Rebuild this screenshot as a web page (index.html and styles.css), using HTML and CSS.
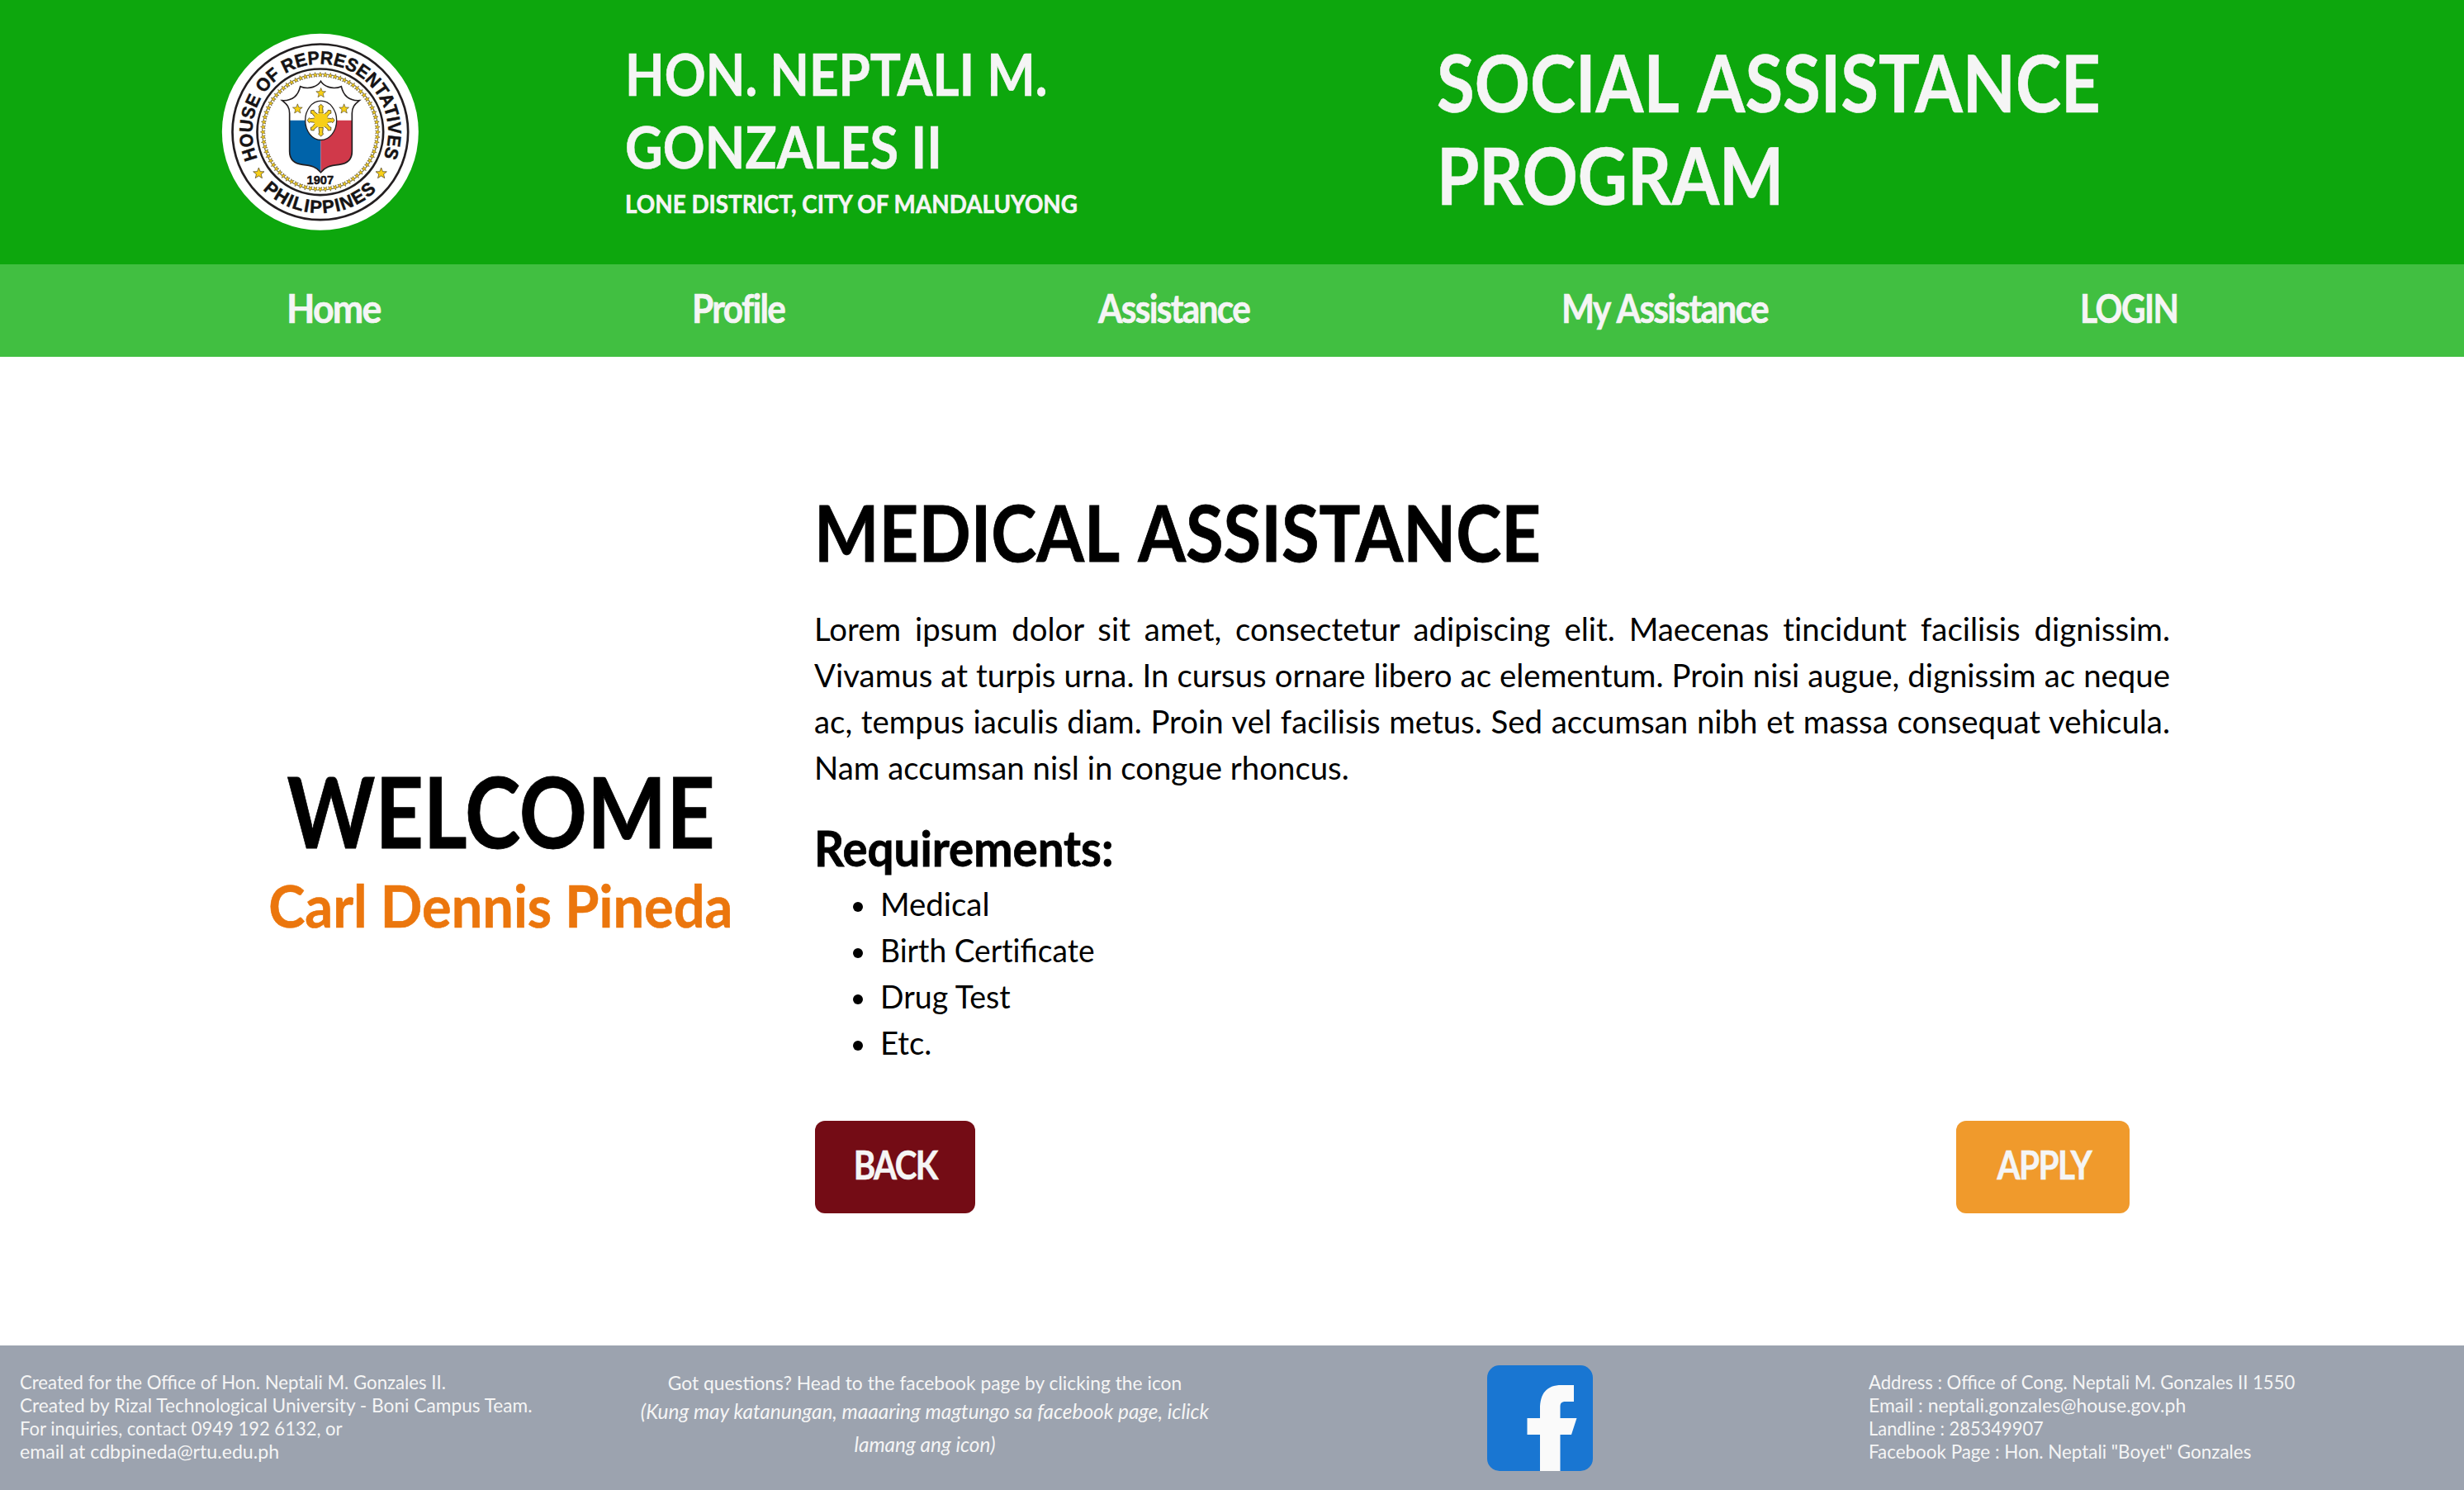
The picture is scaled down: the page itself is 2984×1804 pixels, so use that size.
FILE: index.html
```
<!DOCTYPE html>
<html lang="en">
<head>
<meta charset="utf-8">
<title>Social Assistance Program</title>
<link rel="stylesheet" href="styles.css">
</head>
<body>
<header class="banner">
  <svg class="seal" viewBox="54 60 720 720" role="img" aria-label="House of Representatives seal">
    <defs>
      <path id="star" d="M0-10 2.6-3.3 9.5-3.1 4.1 1.3 5.9 8.1 0 4.2-5.9 8.1-4.1 1.3-9.5-3.1-2.6-3.3Z"/>
      <g id="bead"><use href="#star" transform="translate(0 -208) scale(.95)"/></g>
      <g id="beads"><use href="#bead"/><use href="#bead" transform="rotate(5)"/><use href="#bead" transform="rotate(10)"/><use href="#bead" transform="rotate(15)"/><use href="#bead" transform="rotate(20)"/><use href="#bead" transform="rotate(25)"/></g>
      <g id="quarter"><use href="#beads"/><use href="#beads" transform="rotate(30)"/><use href="#beads" transform="rotate(60)"/></g>
      <path id="ray" d="M-8-26-6-46-9-50 0-58 9-50 6-46 8-26Z"/>
      <path id="arc-top" d="M186 516A247 247 0 1 1 641 516"/>
      <path id="arc-bottom" d="M205 628A295 295 0 0 0 622 628"/>
      <clipPath id="shield-clip"><path d="M415.500 235C405 252 375 268 341 254C334 285 314 307 275 305C294 320 302 330 302 352V490C302 520 318 535 350 538C382 541 400 547 415.500 566C431 547 449 541 481 538C513 535 529 520 529 490V352C529 330 537 320 556 305C517 307 497 285 490 254C456 268 426 252 415.500 235Z"/></clipPath>
    </defs>
    <circle cx="413.500" cy="419.500" r="357" fill="#fff"/>
    <g fill="none" stroke="#231f20">
      <circle cx="413.500" cy="419.500" r="319" stroke-width="8"/>
      <circle cx="413.500" cy="419.500" r="229" stroke-width="8"/>
    </g>
    <g transform="translate(413.500 419.500)" fill="#f7cf17" stroke="#4a3f20" stroke-width="1.600">
      <use href="#quarter"/><use href="#quarter" transform="rotate(90)"/><use href="#quarter" transform="rotate(180)"/><use href="#quarter" transform="rotate(270)"/>
    </g>
    <g class="seal-text">
      <text font-size="67"><textPath href="#arc-top" textLength="968" lengthAdjust="spacingAndGlyphs">HOUSE OF REPRESENTATIVES</textPath></text>
      <text font-size="66"><textPath href="#arc-bottom" textLength="458" lengthAdjust="spacing">PHILIPPINES</textPath></text>
      <text x="413.500" y="608" font-size="46" text-anchor="middle" textLength="98" lengthAdjust="spacingAndGlyphs">1907</text>
    </g>
    <g clip-path="url(#shield-clip)">
      <path fill="#fff" d="M270 230h290v147H270z"/>
      <path fill="#0063a9" d="M270 377h145.500v200H270z"/>
      <path fill="#d0394a" d="M415.500 377H560v200H415.500z"/>
    </g>
    <path fill="none" stroke="#231f20" stroke-width="5" d="M415.500 235C405 252 375 268 341 254C334 285 314 307 275 305C294 320 302 330 302 352V490C302 520 318 535 350 538C382 541 400 547 415.500 566C431 547 449 541 481 538C513 535 529 520 529 490V352C529 330 537 320 556 305C517 307 497 285 490 254C456 268 426 252 415.500 235Z"/>
    <ellipse cx="416" cy="377.500" rx="57" ry="71" fill="#fff" stroke="#231f20" stroke-width="4"/>
    <g transform="translate(416 377)" fill="#f7cf17" stroke="#4a3f20" stroke-width="2.500">
      <use href="#ray"/><use href="#ray" transform="rotate(180)"/>
      <use href="#ray" transform="rotate(90) scale(1 .85)"/><use href="#ray" transform="rotate(270) scale(1 .85)"/>
      <use href="#ray" transform="rotate(45) scale(.9 .88)"/><use href="#ray" transform="rotate(135) scale(.9 .88)"/><use href="#ray" transform="rotate(225) scale(.9 .88)"/><use href="#ray" transform="rotate(315) scale(.9 .88)"/>
      <circle r="26" stroke="none"/>
    </g>
    <g fill="#f7cf17" stroke="#4a3f20" stroke-width="1">
      <use href="#star" transform="translate(416 278) scale(1.850)"/>
      <use href="#star" transform="translate(331 336) scale(1.850)"/>
      <use href="#star" transform="translate(500 336) scale(1.850)"/>
      <use href="#star" transform="translate(190 570) scale(2.100)"/>
      <use href="#star" transform="translate(635 570) scale(2.100)"/>
    </g>
  </svg>
  <div class="office">
    <h2 class="office-name"><span class="fit hon">HON. NEPTALI M.</span><br><span class="fit gon">GONZALES II</span></h2>
    <p class="office-area"><span class="fit lone">LONE DISTRICT, CITY OF MANDALUYONG</span></p>
  </div>
  <h1 class="program"><span class="fit soc">SOCIAL ASSISTANCE</span><br><span class="fit prog">PROGRAM</span></h1>
</header>
<nav class="menu">
  <a><span class="fit home">Home</span></a>
  <a><span class="fit profile">Profile</span></a>
  <a><span class="fit assist">Assistance</span></a>
  <a><span class="fit mine">My Assistance</span></a>
  <a><span class="fit login">LOGIN</span></a>
</nav>
<main class="content">
  <section class="greeting">
    <h2 class="welcome"><span class="fit">WELCOME</span></h2>
    <p class="user"><span class="fit">Carl Dennis Pineda</span></p>
  </section>
  <section class="details">
    <h2 class="title"><span class="fit">MEDICAL ASSISTANCE</span></h2>
    <p class="intro">Lorem ipsum dolor sit amet, consectetur adipiscing elit. Maecenas tincidunt facilisis dignissim. Vivamus at turpis urna. In cursus ornare libero ac elementum. Proin nisi augue, dignissim ac neque ac, tempus iaculis diam. Proin vel facilisis metus. Sed accumsan nibh et massa consequat vehicula. Nam accumsan nisl in congue rhoncus.</p>
    <h3 class="subtitle"><span class="fit">Requirements:</span></h3>
    <ul class="requirements">
      <li>Medical</li>
      <li><span class="fit birth">Birth Cer<span class="plain">t</span>ificate</span></li>
      <li><span class="fit drug">Drug Test</span></li>
      <li>Etc.</li>
    </ul>
    <div class="actions">
      <a class="button back"><span class="fit">BACK</span></a>
      <a class="button apply"><span class="fit">APPLY</span></a>
    </div>
  </section>
</main>
<footer class="footer">
  <p class="credits"><span class="fit c1">Created for the Office of Hon. Neptali M. Gonzales II.</span><br><span class="fit c2">Created by Rizal Technological University - Boni Campus Team.</span><br><span class="fit c3">For inquiries, contact 0949 192 6132, or</span><br><span class="fit c4">email at cdbpineda@rtu.edu.ph</span></p>
  <div class="help">
    <p>Got questions? Head to the facebook page by clicking the icon</p>
    <p class="help-local">(Kung may katanungan, maaaring magtungo sa facebook page, iclick lamang ang icon)</p>
  </div>
  <svg class="facebook" viewBox="0 0 128 128" role="img" aria-label="Facebook">
    <rect width="128" height="128" rx="15" fill="#1976d2"/>
    <path fill="#fafafa" d="M64 128V84H48.500V64H64V53C64 34 72 24 90 24H105V44H95C89.500 44 88.500 46 88.500 51V64H108.500L102 84H88.500V128Z"/>
  </svg>
  <p class="contact"><span class="fit a1">Address : Office of Cong. Neptali M. Gonzales II 1550</span><br><span class="fit a2">Email : neptali.gonzales@house.gov.ph</span><br><span class="fit a3">Landline : 285349907</span><br><span class="fit a4">Facebook Page : Hon. Neptali "Boyet" Gonzales</span></p>
</footer>
</body>
</html>
```
FILE: styles.css
```
* { box-sizing: border-box; margin: 0; padding: 0; }

body {
  width: 2984px;
  height: 1804px;
  overflow: hidden;
  display: flex;
  flex-direction: column;
  background: #fff;
  color: #000;
  font-family: Lato, "Noto Sans", sans-serif;
}

.fit {
  display: inline-block;
  white-space: nowrap;
  transform: scaleX(var(--x, 1));
  transform-origin: left center;
}

.banner {
  height: 320px;
  padding: 40px 0 0 268px;
  display: grid;
  grid-template-columns: 489px 983px 1fr;
  align-items: start;
  background: #0da70d;
  color: #f5f5f5;
}
.seal { width: 240px; height: 240px; }
.seal-text {
  font-family: "Liberation Sans", Arial, sans-serif;
  font-weight: 700;
  fill: #151314;
  stroke: #151314;
  stroke-width: 1.5px;
}
.office { padding-top: 5px; }
.office-name { font-size: 71px; line-height: 88px; font-weight: 700; }
.office-area { font-size: 31.4px; line-height: 50px; font-weight: 700; }
.program { padding-top: 3px; font-size: 95px; line-height: 112px; font-weight: 700; }
.office, .program { -webkit-text-stroke: .6px currentColor; }
.hon { --x: .872; }
.gon { --x: .889; }
.lone { --x: .886; }
.soc { --x: .876; word-spacing: 8px; }
.prog { --x: .873; }

.menu {
  height: 112px;
  padding-left: 347px;
  display: grid;
  grid-template-columns: 491px 492px 561px 628px 1fr;
  background: #41bf41;
  color: #f5f5f5;
  font-size: 48px;
  line-height: 106px;
  font-weight: 700;
  letter-spacing: -1.9px;
  -webkit-text-stroke: .6px currentColor;
}
.home { --x: .931; }
.profile { --x: .883; }
.assist { --x: .883; }
.mine { --x: .884; word-spacing: 2px; }
.login { --x: .85; }

.content {
  height: 1197px;
  padding-left: 225px;
  display: grid;
  grid-template-columns: 761px 1642px;
}
.greeting { padding-top: 490px; text-align: center; }
.greeting .fit { transform-origin: center; }
.welcome { --x: .862; padding-left: 3px; font-size: 118px; line-height: 120px; font-weight: 700; }
.user { --x: .939; margin-top: 4px; padding-left: 2px; font-size: 71px; line-height: 100px; font-weight: 700; color: #eb760d; -webkit-text-stroke: .6px currentColor; }
.welcome, .title, .subtitle { -webkit-text-stroke: .8px currentColor; }

.details { padding-top: 156px; }
.title { --x: .88; word-spacing: 8px; font-size: 94.5px; line-height: 112px; font-weight: 700; }
.intro { margin-top: 33px; font-size: 38.4px; line-height: 56px; text-align: justify; font-variant-ligatures: none; }
.subtitle { --x: .957; margin-top: 40px; font-size: 59px; line-height: 60px; font-weight: 700; }
.requirements { margin-top: 9px; list-style: none; font-size: 38.4px; line-height: 56px; }
.requirements li { display: flex; align-items: center; gap: 21px; padding-left: 47px; }
.requirements li::before { content: ""; width: 12px; height: 12px; margin-top: 8px; border-radius: 50%; background: #000; }
.birth { --x: .968; }
.drug { --x: .977; }
.plain { font-variant-ligatures: none; }

.actions { display: flex; justify-content: space-between; margin: 67px 49px 0 1px; }
.button {
  height: 112px;
  border-radius: 12px;
  color: #f5f5f5;
  display: flex;
  justify-content: center;
  font-size: 48px;
  line-height: 105px;
  font-weight: 700;
  letter-spacing: -1.9px;
  -webkit-text-stroke: .6px currentColor;
}
.button .fit { transform-origin: center; }
.back { --x: .84; width: 194px; background: #740c15; }
.apply { --x: .845; width: 210px; padding-left: 2px; background: #f09a2c; }

.footer {
  height: 175px;
  padding-left: 24px;
  display: grid;
  grid-template-columns: 725px 740px 774px 1fr;
  background: #9ca3af;
  color: #f5f5f5;
  font-size: 22.3px;
  line-height: 28px;
}
.credits, .contact { padding-top: 31px; }
.c1 { --x: .995; }
.c2 { --x: 1.017; }
.c3 { --x: .988; }
.c4 { --x: 1.038; }
.a1 { --x: .99; }
.a2 { --x: 1.03; }
.a3 { --x: .982; }
.a4 { --x: 1.005; }
.help { padding: 25px 0 0 2px; text-align: center; font-size: 22.8px; line-height: 40px; }
.help-local { margin-top: -5px; padding: 0 16px; font-size: 24.4px; font-style: italic; }
.facebook { width: 128px; height: 128px; margin: 24px 0 0 312px; }
```
